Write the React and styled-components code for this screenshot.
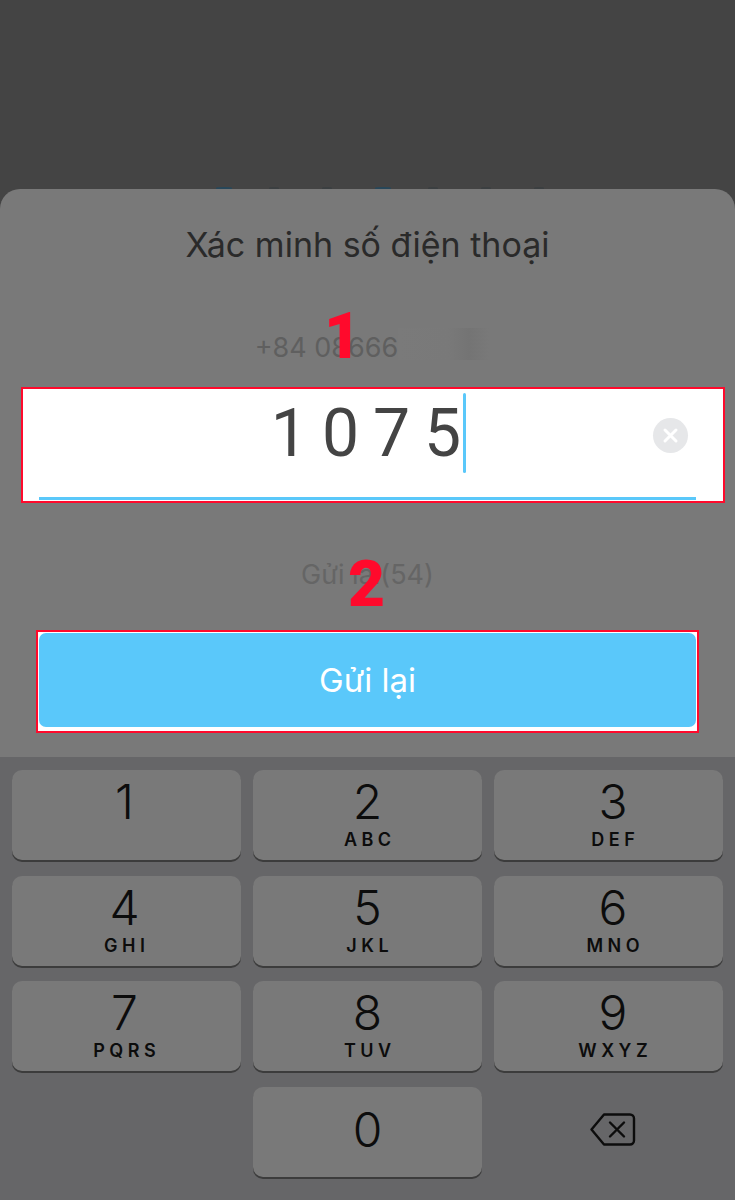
import React from "react";
import styled, { createGlobalStyle } from "styled-components";

const GlobalStyle = createGlobalStyle`
  html, body {
    margin: 0;
    padding: 0;
    background: #444444;
  }
  * {
    box-sizing: border-box;
  }
`;

const Screen = styled.div`
  width: 735px;
  height: 1200px;
  display: flex;
  flex-direction: column;
  overflow: hidden;
  background: #444444;
  font-family: "Inter", "Liberation Sans", sans-serif;
`;

const Backdrop = styled.div`
  height: 189px;
  flex-shrink: 0;
  padding-left: 216px;
  display: flex;
  align-items: flex-end;
`;

// tops of the page content that peek out above the sheet
const PeekCell = styled.div`
  width: 53px;
`;

const Peek = styled.div`
  width: ${(p) => (p.$blue ? 16 : 10)}px;
  height: 2px;
  border-radius: 50% 50% 0 0;
  background: ${(p) => (p.$blue ? "#27475a" : "#3b3f41")};
`;

const Sheet = styled.section`
  position: relative;
  height: 568px;
  flex-shrink: 0;
  display: flex;
  flex-direction: column;
  align-items: center;
  background: #797979;
  border-radius: 20px 20px 0 0;
`;

const Title = styled.h1`
  margin: 35px 0 0;
  height: 42px;
  font-size: 34px;
  line-height: 42px;
  font-weight: 400;
  color: #2a2a2a;
`;

const PhoneRow = styled.div`
  margin: 61px 0 0 9px;
  height: 40px;
  display: flex;
  align-items: center;
  font-size: 27px;
  color: #5f5f5f;
`;

const BlurredDigits = styled.div`
  width: 91px;
  height: 32px;
  margin-bottom: 6px;
  background: linear-gradient(90deg, #7a7a7a 0%, #797979 55%, #747474 78%, #797979 100%);
`;

const InputBox = styled.div`
  position: relative;
  align-self: flex-start;
  margin: 20px 0 0 21px;
  width: 704px;
  height: 116px;
  padding: 0 27px 1px 16px;
  display: flex;
  flex-direction: column;
  justify-content: flex-end;
  background: #ffffff;
  border: 2px solid #ff0a2c;
`;

const CodeLine = styled.div`
  position: absolute;
  top: 4px;
  left: 0;
  right: 9px;
  height: 80px;
  display: flex;
  align-items: center;
  justify-content: center;
`;

const Code = styled.span`
  font-family: "Roboto", "Liberation Sans", sans-serif;
  font-size: 66px;
  letter-spacing: 14px;
  color: #444444;
  margin-right: -12px;
`;

const Caret = styled.span`
  width: 3px;
  height: 80px;
  background: #5ac8fa;
  border-radius: 2px;
`;

const ClearButton = styled.div`
  position: absolute;
  top: 29px;
  right: 35px;
  width: 35px;
  height: 35px;
  border-radius: 50%;
  background: #e6e7e9;
  display: flex;
  align-items: center;
  justify-content: center;
`;

const Underline = styled.div`
  height: 3px;
  background: #5ac8fa;
`;

const ResendTimer = styled.div`
  margin-top: 52px;
  height: 40px;
  font-size: 27px;
  line-height: 40px;
  color: #656565;
`;

const ResendFrame = styled.div`
  margin-top: 35px;
  width: 663px;
  height: 103px;
  padding: 1px 1px 5px;
  background: #ffffff;
  border: 2px solid #ff0a2c;
`;

const ResendButton = styled.button`
  width: 100%;
  height: 94px;
  padding: 0;
  border: none;
  border-radius: 7px;
  background: #5ac8fa;
  color: #ffffff;
  font-family: inherit;
  font-size: 33px;
  font-weight: 400;
`;

const Marker = styled.span`
  position: absolute;
  top: ${(p) => p.$top}px;
  left: ${(p) => p.$left}px;
  font-family: "Roboto", "Liberation Sans", sans-serif;
  font-size: 64px;
  line-height: 64px;
  font-weight: 900;
  color: #ff0a2c;
`;

const Keyboard = styled.div`
  flex: 1;
  padding: 13px 12px 0;
  display: grid;
  grid-template-columns: repeat(3, 229px);
  grid-auto-rows: 92.3px;
  column-gap: 12px;
  row-gap: 13.3px;
  background: #666668;
`;

const Key = styled.div`
  height: 90.3px;
  display: flex;
  flex-direction: column;
  align-items: center;
  justify-content: ${(p) => (p.$center ? "center" : "flex-start")};
  padding: ${(p) => (p.$center ? "0 0 4px" : "5px 0 0")};
  background: #797979;
  border-radius: 10px;
  box-shadow: 0 2px 0 #3c3c3c;
  color: #0c0c0c;

  &:nth-child(3n + 1) {
    padding-right: 4px;
  }

  &:nth-child(3n) {
    padding-left: 9px;
  }
`;

const Digit = styled.div`
  font-size: 48px;
  line-height: 54px;
  font-weight: 300;
`;

const Letters = styled.div`
  margin-top: 0;
  font-size: 18px;
  line-height: 22px;
  font-weight: 600;
  letter-spacing: 4.5px;
  margin-right: -4.5px;
`;

const BlankKey = styled.div``;

const BackspaceKey = styled.div`
  display: flex;
  align-items: center;
  justify-content: center;
  height: 85px;
  padding-left: 9px;
`;

const keys = [
  ["1", ""],
  ["2", "ABC"],
  ["3", "DEF"],
  ["4", "GHI"],
  ["5", "JKL"],
  ["6", "MNO"],
  ["7", "PQRS"],
  ["8", "TUV"],
  ["9", "WXYZ"],
];

const peeks = [true, false, false, true, false, false, false];

const App = () => {
  return (
    <>
      <GlobalStyle />
      <Screen>
        <Backdrop>
          {peeks.map((blue, i) => (
            <PeekCell key={i}>
              <Peek $blue={blue} />
            </PeekCell>
          ))}
        </Backdrop>
        <Sheet>
          <Title>Xác minh số điện thoại</Title>
          <PhoneRow>
            +84 08666
            <BlurredDigits />
          </PhoneRow>
          <InputBox>
            <CodeLine>
              <Code>1075</Code>
              <Caret />
            </CodeLine>
            <ClearButton>
              <svg width="17" height="17" viewBox="0 0 17 17">
                <path d="M3 3L14 14M14 3L3 14" stroke="#fff" strokeWidth="3" strokeLinecap="round" />
              </svg>
            </ClearButton>
            <Underline />
          </InputBox>
          <ResendTimer>Gửi lại(54)</ResendTimer>
          <ResendFrame>
            <ResendButton>Gửi lại</ResendButton>
          </ResendFrame>
          <Marker $top={116} $left={324}>1</Marker>
          <Marker $top={364} $left={348}>2</Marker>
        </Sheet>
        <Keyboard>
          {keys.map(([digit, letters]) => (
            <Key key={digit}>
              <Digit>{digit}</Digit>
              {letters && <Letters>{letters}</Letters>}
            </Key>
          ))}
          <BlankKey />
          <Key $center>
            <Digit>0</Digit>
          </Key>
          <BackspaceKey>
            <svg width="46" height="33" viewBox="0 0 46 33" fill="none">
              <path
                d="M14 1.5H40a4 4 0 0 1 4 4V27.500a4 4 0 0 1-4 4H14L1.500 16.500Z"
                stroke="#0c0c0c"
                strokeWidth="2.400"
                strokeLinejoin="round"
              />
              <path d="M20 9.500L34 23.500M34 9.500L20 23.500" stroke="#0c0c0c" strokeWidth="2.400" strokeLinecap="round" />
            </svg>
          </BackspaceKey>
        </Keyboard>
      </Screen>
    </>
  );
};

export default App;
